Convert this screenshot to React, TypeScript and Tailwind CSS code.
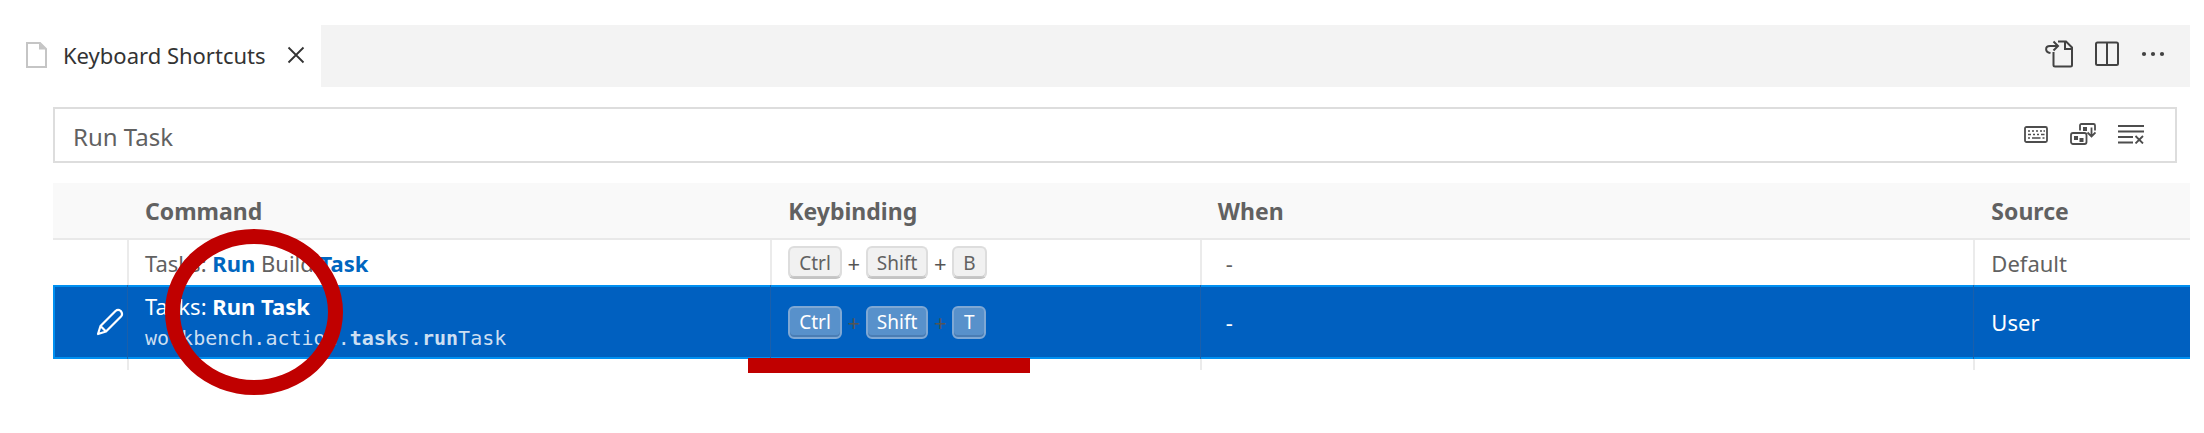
import React from "react";

function KeyCap({ children, selected }: { children: string; selected?: boolean }) {
  return (
    <kbd
      className={
        "flex h-[33px] items-center justify-center rounded-[6px] border-2 px-[9px] font-['Noto_Sans'] text-[19px] leading-[28px] min-w-[34px] " +
        (selected
          ? "border-[#7fa8d4] bg-[#5891cb] text-white shadow-[inset_0_-2px_0_#4a7db4]"
          : "border-[#dddddd] border-b-[#c4c4c4] bg-[#f1f1f1] text-[#616161] shadow-[inset_0_-1px_0_#c8c8c8]")
      }
    >
      {children}
    </kbd>
  );
}

function Chord({ keys, selected }: { keys: string[]; selected?: boolean }) {
  return (
    <div className="flex items-center">
      {keys.map((k, i) => (
        <React.Fragment key={k}>
          {i > 0 && <span className="w-6 text-center text-[22px] leading-6 text-[#555555]">+</span>}
          <KeyCap selected={selected}>{k}</KeyCap>
        </React.Fragment>
      ))}
    </div>
  );
}

const line = "border-l-2 border-[#ebebeb] pl-4";
const selLine = "border-l border-[#1a5fab] pl-[17px]";

export default function App() {
  return (
    <main className="min-h-screen bg-white pt-[25px] pr-[14px] font-['Noto_Sans',sans-serif] text-[22px] leading-8 text-[#616161]">
      <header className="flex h-[62px] bg-[#f3f3f3]">
        <div className="flex w-[321px] items-center bg-white pb-0.5 pl-[26px] text-[#333333]">
          <svg width="21" height="26" viewBox="0 0 21 26" className="mr-4 shrink-0" fill="none" stroke="#c5c5c5" strokeWidth="2">
            <path d="M1 1H14L20 7V25H1Z" />
            <path d="M13 1V7.500H20Z" fill="#c5c5c5" stroke="none" />
          </svg>
          <span className="whitespace-nowrap">Keyboard Shortcuts</span>
          <button aria-label="Close" className="ml-auto mr-4">
            <svg width="18" height="18" viewBox="0 0 18 18" stroke="#333" strokeWidth="1.800" fill="none">
              <path d="M1.500 1.500L16.500 16.500M16.500 1.500L1.500 16.500" />
            </svg>
          </button>
        </div>
        <div className="ml-auto flex items-center gap-[22px] pr-[25px] pb-1 text-[#424242]">
          <button aria-label="Open Keyboard Shortcuts (JSON)">
            <svg width="28" height="28" viewBox="0 0 28 28" fill="none" stroke="currentColor" strokeWidth="2">
              <path d="M13 1.500H21L27 7.500V25Q27 26.500 25.500 26.500H10Q8.500 26.500 8.500 25V12M20 1.500V9H27" />
              <path d="M5.500 13C-.5 12 0 6 5 6H12.500M8.500 1.500L13 6L8.500 10.500" />
            </svg>
          </button>
          <button aria-label="Split Editor">
            <svg width="24" height="26" viewBox="0 0 24 26" fill="none" stroke="currentColor" strokeWidth="2">
              <rect x="1" y="1.500" width="22" height="22.500" rx="1.500" />
              <path d="M12 1.500V24" />
            </svg>
          </button>
          <button aria-label="More Actions">
            <svg width="24" height="6" viewBox="0 0 24 6" fill="currentColor">
              <circle cx="3" cy="3" r="2.100" />
              <circle cx="12" cy="3" r="2.100" />
              <circle cx="21" cy="3" r="2.100" />
            </svg>
          </button>
        </div>
      </header>

      <div className="mt-5 ml-[53px] mr-[13px] flex h-14 items-center border-2 border-[#dddddd] pr-[31px]">
        <input
          aria-label="Search keybindings"
          defaultValue="Run Task"
          className="h-full min-w-0 flex-1 pt-0.5 pl-[18px] text-[24px] text-[#616161] outline-none"
        />
        <div className="flex items-center gap-[22px] pb-0.5 text-[#4d4d4d]">
          <button aria-label="Record Keys">
            <svg width="24" height="17" viewBox="0 0 24 17" fill="none" stroke="currentColor" strokeWidth="2">
              <rect x="1" y="1" width="22" height="15" rx="1.500" strokeWidth="1.800" />
              <path
                d="M4 5H6M8 5H10M12 5H14M16 5H18M19.500 5H21M4 8.500H7M9 8.500H11M13 8.500H15M17 8.500H20.500M4 12H6M8 12H16.500M18.500 12H20.500"
                strokeWidth="1.600"
              />
            </svg>
          </button>
          <button aria-label="Sort by Precedence">
            <svg width="26" height="22" viewBox="0 0 26 22" fill="none" stroke="currentColor" strokeWidth="1.800">
              <rect x="1" y="10" width="15.500" height="11" rx="2" />
              <path d="M10 7.500V2.500Q10 1 11.500 1H23.500Q25 1 25 2.500V7.500M21.500 4.500V13M17.500 9.500L21.500 13.500L25.500 9.500" />
              <path d="M4 13H8V17H4ZM9.500 15H13.500V19H9.500ZM13 4H17V8H13Z" fill="currentColor" stroke="none" />
            </svg>
          </button>
          <button aria-label="Clear Search">
            <svg width="26" height="20" viewBox="0 0 26 20" fill="none" stroke="currentColor" strokeWidth="1.800">
              <path d="M0 2H26M0 7.500H26M0 13H15M0 18.500H15M17.500 12L25 19.500M25 12L17.500 19.500" />
            </svg>
          </button>
        </div>
      </div>

      <div className="mt-5 pl-[53px]">
        <table className="w-full table-fixed border-separate border-spacing-0 text-left">
          <colgroup>
            <col className="w-[74px]" />
            <col className="w-[30.1%]" />
            <col className="w-[20.1%]" />
            <col className="w-[36.2%]" />
            <col />
          </colgroup>
          <thead className="text-[23px]">
            <tr className="h-[57px] bg-[#f9f9f9] [&>th]:border-b-2 [&>th]:border-[#e9e9e9] [&>th]:pl-[18px]">
              <th aria-label="Actions" />
              <th>Command</th>
              <th>Keybinding</th>
              <th>When</th>
              <th>Source</th>
            </tr>
          </thead>
          <tbody>
            <tr className="h-[45px] [&>td]:py-0">
              <td />
              <td className={line}>
                Tasks: <b className="text-[#0066bf]">Run</b> Build <b className="text-[#0066bf]">Task</b>
              </td>
              <td className={line}>
                <Chord keys={["Ctrl", "Shift", "B"]} />
              </td>
              <td className={line}>
                <span className="pl-2">-</span>
              </td>
              <td className={line}>Default</td>
            </tr>
            <tr className="h-[74px] bg-[#0060c0] text-white shadow-[inset_0_2px_#0090f1,inset_0_-2px_#0090f1,inset_2px_0_#0090f1] [&>td]:py-0">
              <td className="pr-[3px]">
                <button aria-label="Change Keybinding" className="ml-auto block">
                  <svg width="28" height="28" viewBox="0 0 28 28" fill="none" stroke="currentColor" strokeWidth="2.200" strokeLinejoin="round">
                    <path d="M2 26L4.500 18L19.500 3Q22 .8 24.800 3Q27.200 6 25 8.500L10 23.500ZM4.500 18L10 23.500" />
                  </svg>
                </button>
              </td>
              <td className={"relative " + selLine}>
                <div>
                  Tasks: <b>Run Task</b>
                </div>
                <code className="block font-['DejaVu_Sans_Mono',monospace] text-[20px] leading-8 text-[#ccdff2]">
                  workbench.action.<b>task</b>s.<b>run</b>Task
                </code>
                <div className="pointer-events-none absolute top-[-56px] left-[37px] h-[166px] w-[178px] rounded-[50%] border-[15px] border-[#c00000]" />
              </td>
              <td className={"relative " + selLine}>
                <Chord keys={["Ctrl", "Shift", "T"]} selected />
                <div className="pointer-events-none absolute top-[73px] left-[-23px] h-[15px] w-[282px] bg-[#c00000]" />
              </td>
              <td className={selLine}>
                <span className="pl-2">-</span>
              </td>
              <td className={selLine}>User</td>
            </tr>
            <tr className="h-[11px] [&>td]:p-0" aria-hidden="true">
              <td />
              <td className="border-l-2 border-[#ebebeb]" />
              <td className="border-l-2 border-[#ebebeb]" />
              <td className="border-l-2 border-[#ebebeb]" />
              <td className="border-l-2 border-[#ebebeb]" />
            </tr>
          </tbody>
        </table>
      </div>
    </main>
  );
}
